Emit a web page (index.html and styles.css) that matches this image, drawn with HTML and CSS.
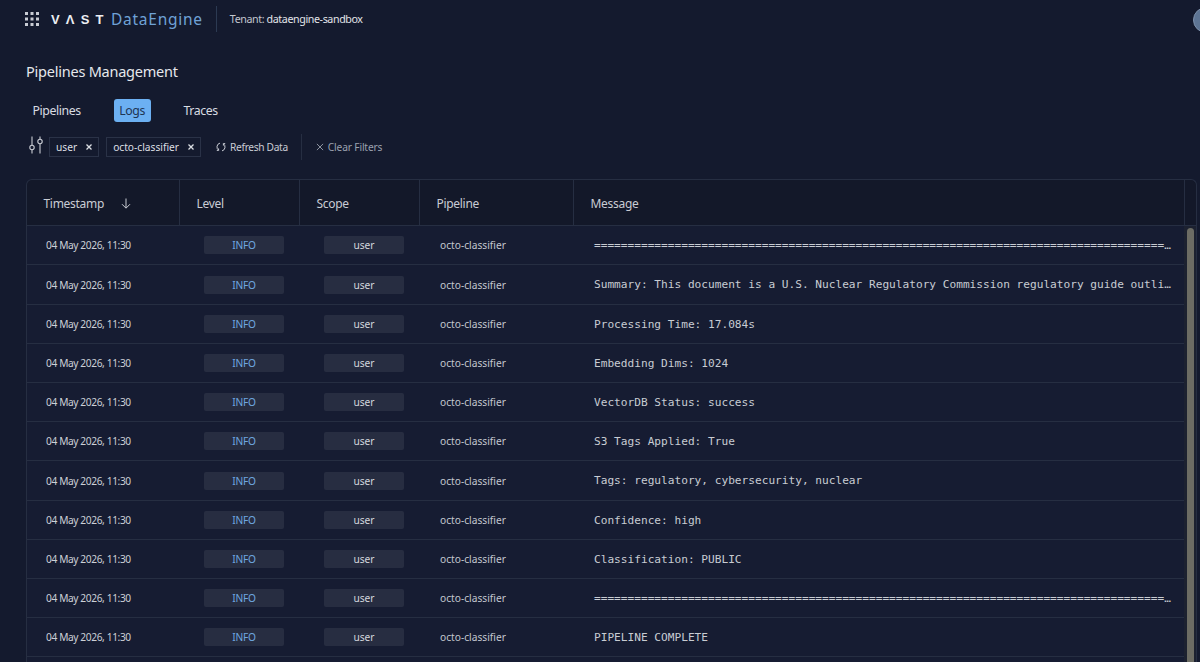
FILE: index.html
```html
<!DOCTYPE html>
<html lang="en">
<head>
<meta charset="utf-8">
<title>Pipelines Management</title>
<link rel="stylesheet" href="styles.css">
</head>
<body>
<div class="page">
  <header class="topbar">
    <svg class="apps" width="14" height="14" viewBox="0 0 14 14" fill="#c9ccd4"><rect x="0" y="0" width="3" height="3"/><rect x="5.5" y="0" width="3" height="3"/><rect x="11" y="0" width="3" height="3"/><rect x="0" y="5.5" width="3" height="3"/><rect x="5.5" y="5.5" width="3" height="3"/><rect x="11" y="5.5" width="3" height="3"/><rect x="0" y="11" width="3" height="3"/><rect x="5.5" y="11" width="3" height="3"/><rect x="11" y="11" width="3" height="3"/></svg>
    <span class="brand">V&#923;ST</span>
    <span class="product">DataEngine</span>
    <span class="divider"></span>
    <span class="tenant">Tenant: <span class="tenant-name">dataengine-sandbox</span></span>
    <span class="avatar"></span>
  </header>
  <h1 class="title">Pipelines Management</h1>
  <nav class="tabs">
    <span class="tab">Pipelines</span>
    <span class="tab active">Logs</span>
    <span class="tab">Traces</span>
  </nav>
  <div class="filters">
    <svg class="filter-icon" width="14" height="18" viewBox="0 0 14 18" fill="none" stroke="#c9ccd4" stroke-width="1.1"><path d="M3 0.5V9M3 14V17.5M11 0.5V3M11 8V17.5"/><circle cx="3" cy="11.5" r="2.2"/><circle cx="11" cy="5.5" r="2.2"/></svg>
    <span class="chip">user<svg class="chip-x" width="6" height="6" viewBox="0 0 6 6" fill="none" stroke="#dcdfe4" stroke-width="1.3"><path d="M0.5 0.5L5.5 5.5M5.5 0.5L0.5 5.5"/></svg></span>
    <span class="chip">octo-classifier<svg class="chip-x" width="6" height="6" viewBox="0 0 6 6" fill="none" stroke="#dcdfe4" stroke-width="1.3"><path d="M0.5 0.5L5.5 5.5M5.5 0.5L0.5 5.5"/></svg></span>
    <span class="action refresh"><svg width="10" height="10" viewBox="0 0 10 10" fill="none" stroke="#c9ccd4" stroke-width="1"><path d="M4 1.1A4 4 0 0 0 2.6 8.2M6 8.9A4 4 0 0 0 7.4 1.8"/><path d="M2.6 6.4V8.4H0.8M7.4 3.6V1.6H9.2"/></svg>Refresh Data</span>
    <span class="vrule"></span>
    <span class="action clear"><svg width="8" height="8" viewBox="0 0 9 9" fill="none" stroke="#9ba1ae" stroke-width="1"><path d="M1 1L8 8M8 1L1 8"/></svg>Clear Filters</span>
  </div>
  <section class="table">
    <div class="thead">
      <div class="th">Timestamp<svg class="sort" width="10" height="11" viewBox="0 0 10 11" fill="none" stroke="#c9ccd4" stroke-width="1"><path d="M5 0.5V10M1 6.2L5 10.2L9 6.2"/></svg></div>
      <div class="th">Level</div>
      <div class="th">Scope</div>
      <div class="th">Pipeline</div>
      <div class="th">Message</div>
      <div class="th"></div>
    </div>
    <div class="tbody">
      <div class="rows">
        <div class="row"><span class="ts">04 May 2026, 11:30</span><span class="cell"><span class="badge info">INFO</span></span><span class="cell"><span class="badge">user</span></span><span class="pipe">octo-classifier</span><span class="msg">========================================================================================================</span></div>
        <div class="row"><span class="ts">04 May 2026, 11:30</span><span class="cell"><span class="badge info">INFO</span></span><span class="cell"><span class="badge">user</span></span><span class="pipe">octo-classifier</span><span class="msg">Summary: This document is a U.S. Nuclear Regulatory Commission regulatory guide outlining cybersecurity programs</span></div>
        <div class="row"><span class="ts">04 May 2026, 11:30</span><span class="cell"><span class="badge info">INFO</span></span><span class="cell"><span class="badge">user</span></span><span class="pipe">octo-classifier</span><span class="msg">Processing Time: 17.084s</span></div>
        <div class="row"><span class="ts">04 May 2026, 11:30</span><span class="cell"><span class="badge info">INFO</span></span><span class="cell"><span class="badge">user</span></span><span class="pipe">octo-classifier</span><span class="msg">Embedding Dims: 1024</span></div>
        <div class="row"><span class="ts">04 May 2026, 11:30</span><span class="cell"><span class="badge info">INFO</span></span><span class="cell"><span class="badge">user</span></span><span class="pipe">octo-classifier</span><span class="msg">VectorDB Status: success</span></div>
        <div class="row"><span class="ts">04 May 2026, 11:30</span><span class="cell"><span class="badge info">INFO</span></span><span class="cell"><span class="badge">user</span></span><span class="pipe">octo-classifier</span><span class="msg">S3 Tags Applied: True</span></div>
        <div class="row"><span class="ts">04 May 2026, 11:30</span><span class="cell"><span class="badge info">INFO</span></span><span class="cell"><span class="badge">user</span></span><span class="pipe">octo-classifier</span><span class="msg">Tags: regulatory, cybersecurity, nuclear</span></div>
        <div class="row"><span class="ts">04 May 2026, 11:30</span><span class="cell"><span class="badge info">INFO</span></span><span class="cell"><span class="badge">user</span></span><span class="pipe">octo-classifier</span><span class="msg">Confidence: high</span></div>
        <div class="row"><span class="ts">04 May 2026, 11:30</span><span class="cell"><span class="badge info">INFO</span></span><span class="cell"><span class="badge">user</span></span><span class="pipe">octo-classifier</span><span class="msg">Classification: PUBLIC</span></div>
        <div class="row"><span class="ts">04 May 2026, 11:30</span><span class="cell"><span class="badge info">INFO</span></span><span class="cell"><span class="badge">user</span></span><span class="pipe">octo-classifier</span><span class="msg">========================================================================================================</span></div>
        <div class="row"><span class="ts">04 May 2026, 11:30</span><span class="cell"><span class="badge info">INFO</span></span><span class="cell"><span class="badge">user</span></span><span class="pipe">octo-classifier</span><span class="msg">PIPELINE COMPLETE</span></div>
      </div>
      <div class="scrollbar"><div class="thumb"></div></div>
    </div>
  </section>
</div>
</body>
</html>
```
FILE: styles.css
```css
* { box-sizing: border-box; }
html, body { margin: 0; height: 100%; overflow: hidden; }
body { background: #141a2e; color: #d3d6dd; font-family: "Noto Sans", "Open Sans", sans-serif; }
.page { height: 662px; overflow: hidden; padding-left: 26px; }
.topbar { display: flex; align-items: center; height: 38px; position: relative; }
.apps { margin-left: -1px; }
.brand { margin-left: 12px; color: #eceef2; font: 700 13px "Liberation Sans", sans-serif; letter-spacing: 6.2px; width: 60px; }
.product { color: #6fa2d6; font-size: 15.5px; letter-spacing: 0.75px; }
.divider { width: 1px; height: 26px; background: #2c3a52; margin-left: 13px; }
.tenant { margin-left: 13px; font-size: 10.7px; letter-spacing: -0.4px; color: #c3c6ce; }
.tenant-name { color: #e2e4e9; }
.avatar { position: absolute; left: 1167px; top: 7px; width: 26px; height: 26px; border-radius: 50%; background: #5d7494; border: 1px solid #7d90ab; }
.title { margin: 23px 0 0; height: 21px; font-size: 14.5px; letter-spacing: -0.23px; line-height: 21px; font-weight: 400; color: #e6e8ec; }
.tabs { display: flex; align-items: center; gap: 27.5px; margin: 17px 0 0 1px; height: 23px; }
.tab { font-size: 12.3px; letter-spacing: -0.4px; line-height: 23px; padding: 0 5.5px; color: #d9dce2; }
.tab.active { background: #6cb0f2; color: #1f3552; border-radius: 3px; }
.filters { display: flex; align-items: center; height: 32px; margin-top: 9px; }
.filter-icon { margin: -5px 6px 0 3px; }
.chip { display: flex; align-items: center; height: 20px; padding: 0 6px; margin-right: 7px; border: 1px solid #2a3247; font-size: 10.2px; color: #dcdfe4; }
.chip-x { margin-left: 9px; }
.action { display: flex; align-items: center; gap: 4px; font-size: 10.2px; color: #c9ccd4; }
.refresh { margin-left: 8px; letter-spacing: -0.33px; }
.vrule { width: 1px; height: 26px; background: #262e42; margin: 0 13.5px; }
.clear { color: #9ba1ae; letter-spacing: -0.15px; }
.table { width: 1171px; margin-top: 16px; border: 1px solid #262e42; border-bottom: 0; border-radius: 6px 6px 0 0; background: #131829; }
.thead { display: grid; grid-template-columns: 153px 120px 120px 154px 611px 12px; height: 46px; border-bottom: 1px solid #262e42; }
.th { display: flex; align-items: center; padding: 1px 0 0 16.5px; border-right: 1px solid #262e42; font-size: 12px; letter-spacing: -0.3px; color: #c9ccd4; }
.th:last-child { border-right: 0; }
.sort { margin-left: 17px; }
.tbody { display: flex; background: #161c32; }
.rows { flex: 1; min-width: 0; padding-top: 0.3px; }
.row { display: grid; grid-template-columns: 153px 120px 120px 154px 611px; align-items: center; height: 39.2px; border-bottom: 1px solid #262e42; }
.ts { padding-left: 19px; font-size: 10.2px; letter-spacing: -0.39px; color: #ccd0d7; }
.cell { padding-left: 24px; }
.badge { display: block; width: 80px; height: 18px; line-height: 18px; text-align: center; background: #272d41; border-radius: 2px; font-size: 10.2px; color: #d3d6dd; }
.badge.info { color: #6fa8e0; letter-spacing: -0.2px; }
.pipe { padding-left: 20px; font-size: 10.2px; color: #c3c7cf; }
.msg { padding: 0.6px 12px 0 20px; font: 11.15px "DejaVu Sans Mono", monospace; color: #c8ccd3; white-space: nowrap; overflow: hidden; text-overflow: ellipsis; }
.scrollbar { width: 12px; flex: none; background: #1c2130; padding: 2px 2px 0 3px; }
.thumb { width: 7px; height: 600px; background: #6c6c64; border-radius: 4px 4px 0 0; }
```
